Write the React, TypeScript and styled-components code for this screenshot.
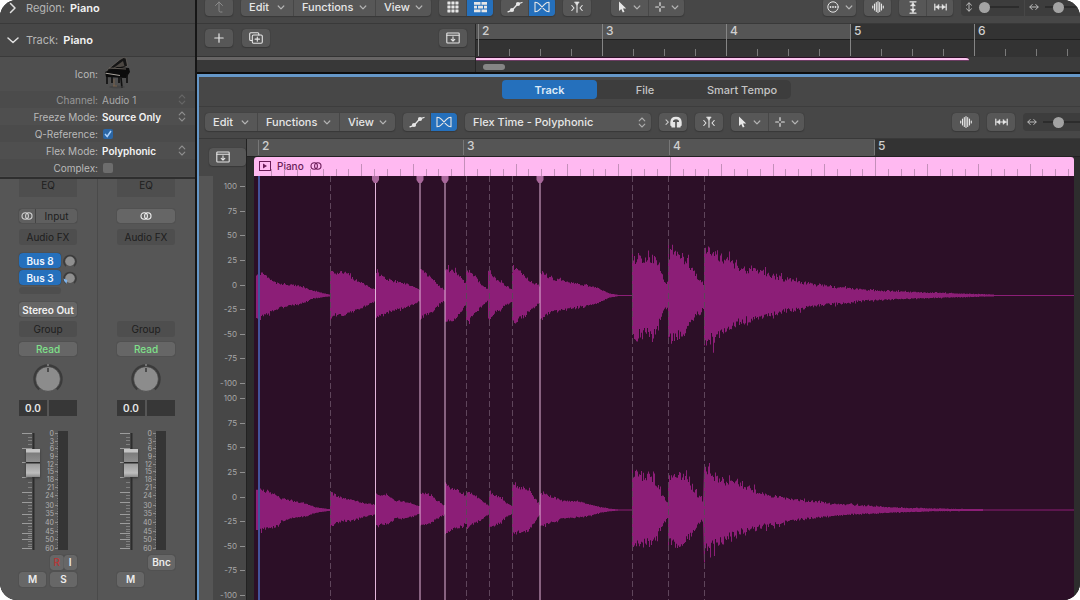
import React from 'react';
import styled, { createGlobalStyle, css } from 'styled-components';

const GlobalStyle = createGlobalStyle`
  * { box-sizing: border-box; }
  body { margin: 0; background: #fff; }
  body, button, select, input {
    font-family: Inter, "Liberation Sans", sans-serif;
    font-size: 11px;
    color: #e6e6e6;
  }
  button, select {
    border: 0;
    margin: 0;
    padding: 0;
    background: none;
  }
  svg { display: block; flex: none; }
`;

const BLUE = '#2570bc';

/* ---------- Shared controls ---------- */

const Window = styled.div`
  display: flex;
  min-height: 100vh;
  border-radius: 17px;
  overflow: hidden;
  background: #161616;
`;

const Spacer = styled.div`
  flex: 1;
`;

const Group = styled.div<{ $apart?: boolean }>`
  display: flex;
  flex: none;
  height: 18px;
  border-radius: 4px;
  overflow: hidden;
  background: #575757;
  box-shadow: 0 0 1px #2c2c2c, 0 1px 1px #3a3a3a;
  margin-left: ${(p) => (p.$apart ? '12px' : '0')};
`;

const GroupButton = styled.button<{ $width: number; $active?: boolean; $dim?: boolean }>`
  display: flex;
  align-items: center;
  justify-content: center;
  width: ${(p) => p.$width}px;
  gap: 6px;
  color: ${(p) => (p.$dim ? '#8a8a8a' : '#e6e6e6')};
  background: ${(p) => (p.$active ? BLUE : 'transparent')};
  & + & { border-left: 1px solid ${(p) => (p.$active ? BLUE : '#474747')}; }
`;

const MenuButton = styled.button<{ $width: number }>`
  display: flex;
  align-items: center;
  justify-content: space-between;
  width: ${(p) => p.$width}px;
  padding: 0 8px 0 8px;
  font-size: 11px;
  line-height: 18px;
  font-weight: 500;
  & + & { border-left: 1px solid #474747; }
`;

const ZoomPanel = styled.div<{ $width: number; $first?: boolean }>`
  display: flex;
  align-items: center;
  flex: none;
  gap: 6px;
  width: ${(p) => p.$width}px;
  height: 18px;
  padding-left: 4px;
  overflow: hidden;
  background: #3d3d3d;
  border-radius: ${(p) => (p.$first ? '4px 0 0 4px' : '0')};
`;

const ZoomSlider = styled.input`
  appearance: none;
  flex: none;
  width: 40px;
  height: 12px;
  margin: 0;
  background: linear-gradient(#2c2c2c, #2c2c2c) center / 100% 2px no-repeat;
  &::-webkit-slider-thumb {
    appearance: none;
    width: 11px;
    height: 11px;
    border-radius: 50%;
    background: #a3a3a3;
  }
`;

/* ---------- Icons ---------- */

const stroke = { fill: 'none', stroke: 'currentColor', strokeLinecap: 'round', strokeLinejoin: 'round' } as const;

const Caret = () => (
  <svg width="8" height="5" viewBox="0 0 8 5" {...stroke} strokeWidth="1.2" opacity=".65"><path d="M1.2 1 4 3.8 6.8 1" /></svg>
);
const UpDown = () => (
  <svg width="8" height="11" viewBox="0 0 8 11" {...stroke} strokeWidth="1.1" opacity=".6"><path d="M1.2 3.8 4 1l2.8 2.8M1.2 7.2 4 10l2.8-2.8" /></svg>
);
const UpArrow = () => (
  <svg width="12" height="12" viewBox="0 0 12 12" {...stroke}><path d="M9 11H7.5Q6 11 6 9.5V1M2.5 4.5 6 1l3.5 3.5" /></svg>
);
const Grid = () => (
  <svg width="12" height="12" viewBox="0 0 12 12" fill="currentColor">
    {[0, 4, 8].map((x) => [0, 4, 8].map((y) => <rect key={`${x}-${y}`} x={x + 0.4} y={y + 0.4} width="3.1" height="3.1" rx=".4" />))}
  </svg>
);
const Lanes = () => (
  <svg width="13" height="12" viewBox="0 0 13 12" fill="currentColor">
    <path d="M0 1h6.500v2.800H0zM7.500 1h5.500v2.800H7.500zM0 4.800h3v2.600H0zM4 4.800h5v2.600H4zM10 4.800h3v2.600h-3zM0 8.400h6.500v2.800H0zM7.500 8.400h5.500v2.800H7.500z" />
  </svg>
);
const Automation = () => (
  <svg width="16" height="12" viewBox="0 0 16 12" {...stroke} strokeWidth="1.3">
    <path d="M1 10.800 5 9.300 11 2.800l4-1.300" /><circle cx="5" cy="9" r="2.100" fill="currentColor" stroke="none" /><circle cx="11" cy="3" r="2.100" fill="currentColor" stroke="none" />
  </svg>
);
const Flex = () => (
  <svg width="16" height="12" viewBox="0 0 16 12" {...stroke} strokeWidth="1.100"><path d="M1 1.2v9.6M15 1.2v9.6M1 1.2q2.600 0 4.500 2.100L10.500 8.700q1.900 2.100 4.500 2.100M15 1.2q-2.600 0-4.500 2.100L5.500 8.700Q3.600 10.800 1 10.800" /></svg>
);
const CatchContent = () => (
  <svg width="12" height="12" viewBox="0 0 12 12" {...stroke} strokeWidth="1.1">
    <path d="M.8 4.500 3 7 .8 9.500M11.200 4.500 9 7l2.200 2.500M6 3v8.200" /><path d="M3.800 1h4.400L6 4z" fill="currentColor" strokeWidth=".6" />
  </svg>
);
const Pointer = () => (
  <svg width="9" height="12" viewBox="0 0 9 12" fill="currentColor"><path d="M1 .5v9.600L3.300 8l1.500 3.500 1.700-.7L5 7.400h3.200z" /></svg>
);
const Cross = () => (
  <svg width="10" height="10" viewBox="0 0 10 10" {...stroke} strokeWidth="1.200"><path d="M5 .7v2.800M5 6.500v2.800M.7 5h2.800M6.500 5h2.800" /></svg>
);
const Plus = () => (
  <svg width="10" height="10" viewBox="0 0 10 10" {...stroke} strokeWidth="1.2"><path d="M5 .8v8.400M.8 5h8.400" /></svg>
);
const Duplicate = () => (
  <svg width="14" height="12" viewBox="0 0 14 12" {...stroke} strokeWidth="1.1"><path d="M3 8.500H1.800Q.7 8.500.7 7.500V1.700Q.7.7 1.800.7h7q1 0 1 1V3" /><rect x="3.300" y="3" width="10" height="8.300" rx="1.200" /><path d="M8.300 5v4.300M6.100 7.150h4.400" /></svg>
);
const CatchBox = () => (
  <svg width="14" height="12" viewBox="0 0 14 12" {...stroke} strokeWidth="1.1"><rect x=".8" y="1" width="12.400" height="10" rx=".8" /><path d="M1 3.200h12M7 4.800v4.200M5.200 7.400 7 9.200l1.800-1.800" /></svg>
);
const Dots = () => (
  <svg width="12" height="12" viewBox="0 0 12 12" {...stroke}><circle cx="6" cy="6" r="5.200" /><g fill="currentColor" stroke="none"><circle cx="3.500" cy="6" r=".9" /><circle cx="6" cy="6" r=".9" /><circle cx="8.500" cy="6" r=".9" /></g></svg>
);
const Wave = () => (
  <svg width="12" height="12" viewBox="0 0 12 12" {...stroke} strokeWidth="1.1"><path d="M.7 5v2M2.500 3v6M4.300 1.500v9M6 .600v10.800M7.700 1.500v9M9.500 3v6M11.300 5v2" /></svg>
);
const FitH = () => (
  <svg width="13" height="10" viewBox="0 0 13 10" {...stroke} strokeWidth="1.200"><path d="M.8 2v6M12.200 2v6M2 5h9" /><path d="M5 2.500v5L1.900 5zM8 2.500v5L11.100 5z" fill="currentColor" strokeWidth=".4" /></svg>
);
const FitV = () => (
  <svg width="10" height="13" viewBox="0 0 10 13" {...stroke} strokeWidth="1.200"><path d="M2 .8h6M2 12.200h6M5 2v9" /><path d="M2.500 5h5L5 1.900zM2.500 8h5L5 11.100z" fill="currentColor" strokeWidth=".4" /></svg>
);
const ArrowsH = () => (
  <svg width="10" height="8" viewBox="0 0 10 8" {...stroke} opacity=".75"><path d="M1 4h8M3.200 1.500.8 4l2.400 2.500M6.800 1.500 9.200 4 6.800 6.500" /></svg>
);
const ArrowsV = () => (
  <svg width="8" height="10" viewBox="0 0 8 10" {...stroke} opacity=".75"><path d="M4 1v8M1.500 3.200 4 .8l2.500 2.400M1.500 6.800 4 9.200l2.500-2.400" /></svg>
);
const Monitor = () => (
  <svg width="17" height="12" viewBox="0 0 17 12" {...stroke} strokeWidth="1.100">
    <path d="m1 3.800 2.300 2.300L1 8.400" opacity=".8" /><path d="M6.600 9V6Q6.800 2 11 2t4.400 4v3" strokeWidth="2.600" /><path d="M7 6.500h2.600v4.500H7zM12.400 6.500H15v4.500h-2.600z" fill="currentColor" />
  </svg>
);
const Stereo = () => (
  <svg width="12" height="8" viewBox="0 0 12 8" {...stroke} strokeWidth="1.100"><circle cx="4.200" cy="4" r="3.200" /><circle cx="7.800" cy="4" r="3.200" /></svg>
);
const PianoPicture = () => (
  <svg width="30" height="34" viewBox="0 0 30 34">
    <path d="M5 13 18 2.500Q22-.5 24 1l1.500 8-9 4-11 1.500z" fill="#151515" stroke="#6f6863" strokeWidth=".7" />
    <path d="M10 12 21 4l1.500 5z" fill="#4c4742" />
    <path d="M3 15 15 10l12 1 1 4-4 6-20-1z" fill="#0c0c0c" />
    <path d="M3.500 16.200 18 18.500" stroke="#a9a49d" />
    <path d="M7 11 24 12" stroke="#857d74" strokeWidth=".7" />
    <path d="M5 20v7M10 20v6M19 21l1 10M25 17v9M17 20v6" stroke="#111" strokeWidth="1.700" />
    <ellipse cx="15" cy="30" rx="8" ry="1.500" fill="#3d3d3d" opacity=".6" />
    <path d="M12 22v7M11 29h4" stroke="#8a6c4a" strokeWidth=".7" />
  </svg>
);

/* ---------- Inspector ---------- */

const Sidebar = styled.aside`
  flex: none;
  display: flex;
  flex-direction: column;
  width: 197px;
  background: #565656;
  border-right: 2px solid #161616;
`;

const DisclosureRow = styled.button<{ $height: number; $bottom?: number }>`
  display: flex;
  align-items: center;
  gap: 5px;
  height: ${(p) => p.$height}px;
  padding: 0 0 ${(p) => p.$bottom ?? 0}px 7px;
  background: #474747;
  border-bottom: 1px solid #3a3a3a;
  font-size: 11px;
  color: #b5b5b5;
  svg { width: 12px; margin-right: 2px; color: #e0e0e0; }
  b { font-weight: 600; color: #f2f2f2; }
`;

const Parameters = styled.div`
  background: #4f4f4f;
  border-bottom: 2px solid #2e2e2e;
  padding-bottom: 1px;
`;

const ParamRow = styled.label<{ $tall?: boolean; $dim?: boolean }>`
  display: grid;
  grid-template-columns: 98px 1fr;
  align-items: center;
  column-gap: 4px;
  height: ${(p) => (p.$tall ? '34px' : '17px')};
  padding-right: 9px;
  font-size: 10px;
  color: #b9b9b9;
  &:nth-child(even) { background: #4b4b4b; }
  & > span { text-align: right; }
  ${(p) => p.$dim && css`
    color: #979797;
    svg { opacity: .35; }
    select { color: #a9a9a9; font-weight: 400; }
  `}
`;

const SelectWrap = styled.div`
  display: flex;
  align-items: center;
  flex: 1;
  min-width: 0;
`;

const ParamSelect = styled.select`
  appearance: none;
  flex: 1;
  min-width: 0;
  font-size: 10px;
  font-weight: 600;
  color: #f4f4f4;
  height: 17px;
  outline: 0;
`;

const Tick = styled.input`
  appearance: none;
  width: 10px;
  height: 10px;
  margin: 0 1px;
  border-radius: 2px;
  background: #6d6d6d;
  &:checked {
    background: #2b66a5 url("data:image/svg+xml,%3Csvg xmlns='http://www.w3.org/2000/svg' viewBox='0 0 10 10'%3E%3Cpath d='M2 5l2.200 2.500L8 2' fill='none' stroke='%23a9d2ff' stroke-width='1.500'/%3E%3C/svg%3E") center no-repeat;
  }
`;

/* ---------- Channel strips ---------- */

const Strips = styled.div`
  display: flex;
  flex: 1;
`;

const Strip = styled.section`
  width: 98px;
  padding: 0 20px 12px 19px;
  display: flex;
  flex-direction: column;
  & + & { border-left: 1px solid #4a4a4a; }
`;

const Slot = styled.button<{ $height: number; $after: number; $kind?: 'raised' | 'bright' | 'auto' | 'off' | 'eq' }>`
  display: flex;
  align-items: center;
  justify-content: center;
  flex: none;
  height: ${(p) => p.$height}px;
  margin-bottom: ${(p) => p.$after}px;
  font-size: 10px;
  border-radius: 3px;
  white-space: nowrap;
  color: #1d1d1d;
  background: #4e4e4e;
  ${(p) => (p.$kind === 'raised' || p.$kind === 'bright' || p.$kind === 'auto') && css`
    background: #666;
    box-shadow: 0 0 1px #2e2e2e;
    color: #f2f2f2;
    font-weight: 600;
  `}
  ${(p) => p.$kind === 'auto' && css`color: #7fe08a; font-weight: 500;`}
  ${(p) => p.$kind === 'off' && css`visibility: hidden;`}
  ${(p) => p.$kind === 'eq' && css`padding-bottom: 7px; border-radius: 0;`}
`;

const InputSlot = styled.div`
  display: flex;
  height: 14px;
  margin-bottom: 6px;
  border-radius: 3px;
  background: #5f5f5f;
  box-shadow: 0 0 1px #222;
`;

const InputPart = styled.button<{ $grow?: boolean }>`
  display: flex;
  align-items: center;
  justify-content: center;
  flex: ${(p) => (p.$grow ? '1' : '0 0 16px')};
  font-size: 10px;
  color: ${(p) => (p.$grow ? '#1d1d1d' : '#d5d5d5')};
  border-left: ${(p) => (p.$grow ? '1px solid #444' : '0')};
`;

const Sends = styled.div`
  display: grid;
  grid-template-columns: 42px 14px;
  column-gap: 2px;
  row-gap: 2px;
  height: 41px;
  margin-bottom: 8px;
  align-content: start;
  align-items: center;
`;

const Send = styled.button<{ $empty?: boolean }>`
  height: ${(p) => (p.$empty ? '7px' : '15px')};
  border-radius: 4px;
  font-size: 10px;
  font-weight: 600;
  color: #eef5ff;
  background: ${(p) => (p.$empty ? '#4e4e4e' : BLUE)};
  box-shadow: ${(p) => (p.$empty ? 'none' : '0 0 1px #1b2b3d')};
`;

const KnobHolder = styled.div`
  display: flex;
  justify-content: center;
  height: 31px;
  margin-bottom: 6px;
`;

const Readouts = styled.div`
  display: grid;
  grid-template-columns: 28px 28px;
  justify-content: space-between;
  margin-bottom: 12px;
`;

const Readout = styled.output`
  height: 16px;
  line-height: 16px;
  font-size: 10px;
  font-weight: 600;
  text-align: center;
  background: #373737;
`;

const FaderRow = styled.div`
  display: flex;
  height: 126px;
  margin-bottom: 1px;
`;

const FaderBox = styled.div`
  position: relative;
  width: 23px;
  height: 118px;
  margin-top: 4px;
`;

const Fader = styled.input`
  position: absolute;
  inset: 0 auto 0 7px;
  appearance: none;
  writing-mode: vertical-lr;
  direction: rtl;
  width: 14px;
  height: 118px;
  margin: 0;
  background: transparent;
  &::-webkit-slider-thumb {
    appearance: none;
    width: 14px;
    height: 28px;
    background: linear-gradient(#c4c4c4 0 3px, #7c7c7c 4px, #8f8f8f 13px, #2a2a2a 13px 14px, #9d9d9d 15px, #bdbdbd 24px, #8b8b8b 28px);
    box-shadow: 0 1px 2px #333;
  }
`;

const ButtonPair = styled.div<{ $after?: number }>`
  display: grid;
  grid-template-columns: 27px 27px;
  justify-content: space-between;
  height: 15px;
  margin-bottom: ${(p) => p.$after ?? 0}px;
`;

const SmallButton = styled.button<{ $red?: boolean; $column?: number }>`
  grid-column: ${(p) => p.$column ?? 'auto'};
  font-size: 10px;
  font-weight: 600;
  line-height: 15px;
  border-radius: 3px;
  color: ${(p) => (p.$red ? '#b13a3a' : '#ececec')};
  background: #676767;
  box-shadow: 0 0 1px #2b2b2b;
`;

const JoinedButtons = styled.div`
  grid-column: 2;
  display: grid;
  grid-template-columns: 1fr 1fr;
`;

const Knob = () => (
  <svg width="32" height="31" viewBox="0 0 32 31">
    <path d="M7.500 26A13.200 13.200 0 1 1 24.500 26" fill="none" stroke="#3b3b3b" strokeWidth="3" />
    <circle cx="16" cy="16" r="12.300" fill="#8c8c8c" stroke="#444" strokeWidth=".6" />
    <path d="M16 1v2" stroke="#aaa" /><path d="M16 5v4" stroke="#222" strokeWidth="1.200" />
  </svg>
);

const SendKnob = ({ low }: { low?: boolean }) => (
  <svg width="14" height="14" viewBox="0 0 14 14">
    <path d="M3 12A6 6 0 1 1 11 12" fill="none" stroke="#3c3c3c" strokeWidth="1.800" />
    <circle cx="7" cy="7.300" r="4.700" fill="#8f8f8f" />
    {low && <path d="M.5 7.500Q.5 10.800 3.500 12.800L4.300 9z" fill="#7fb4ec" />}
  </svg>
);

const FADER_LONG = [2, 17, 31, 46, 61, 71, 83, 92, 102, 108, 117];
const FADER_SHORT = [6, 9, 13, 21, 26, 36, 41, 51, 56, 64, 67, 74, 77, 80, 86, 89, 95, 98, 100, 104, 106, 110, 113, 115];
const FaderScale = () => (
  <svg width="23" height="118" viewBox="0 0 23 118">
    <path d={FADER_LONG.map((y) => `M3 ${y - 0.5}h10`).join('')} stroke="#9c9c9c" />
    <path d={FADER_SHORT.map((y) => `M9 ${y - 0.5}h4`).join('')} stroke="#7f7f7f" />
    <path d="M14.500 1v117" stroke="#2d2d2d" strokeWidth="2" />
  </svg>
);

const METER: [string, number][] = [
  ['0', 2], ['3', 10], ['6', 17], ['9', 25], ['12', 33], ['15', 40], ['18', 48], ['21', 56],
  ['24', 64], ['30', 74], ['35', 82], ['40', 91], ['45', 100], ['50', 108], ['60', 117],
];
const MeterScale = () => (
  <svg width="27" height="126" viewBox="0 -4 27 126">
    <g fill="#b0b0b0" fontSize="7" textAnchor="end">
      {METER.map(([label, y]) => <text key={label} x="12" y={y + 2}>{label}</text>)}
    </g>
    <path d={METER.map(([, y]) => `M13 ${y - 0.5}h3`).join('')} stroke="#8d8d8d" />
    <path d="M15.500 1v117" stroke="#858585" strokeDasharray="1 1.600" />
    <rect x="16" y="-1" width="10" height="119" fill="#353535" />
  </svg>
);

const ChannelStrip = ({ output }: { output?: boolean }) => (
  <Strip aria-label={output ? 'Output channel' : 'Audio channel'}>
    <Slot $height={18} $after={12} $kind="eq">EQ</Slot>
    {output ? (
      <Slot $height={14} $after={6} $kind="raised" aria-label="Format"><Stereo /></Slot>
    ) : (
      <InputSlot>
        <InputPart aria-label="Format"><Stereo /></InputPart>
        <InputPart $grow>Input</InputPart>
      </InputSlot>
    )}
    <Slot $height={16} $after={8}>Audio FX</Slot>
    <Sends>
      {!output && (
        <>
          <Send>Bus 8</Send><SendKnob />
          <Send>Bus 3</Send><SendKnob low />
          <Send $empty aria-label="Empty send" />
        </>
      )}
    </Sends>
    <Slot $height={15} $after={4} $kind={output ? 'off' : 'bright'}>{output ? '' : 'Stereo Out'}</Slot>
    <Slot $height={16} $after={5}>Group</Slot>
    <Slot $height={14} $after={7} $kind="auto">Read</Slot>
    <KnobHolder><Knob /></KnobHolder>
    <Readouts>
      <Readout>0.0</Readout>
      <Readout />
    </Readouts>
    <FaderRow>
      <FaderBox>
        <FaderScale />
        <Fader type="range" min="0" max="100" defaultValue="81" aria-label="Volume" />
      </FaderBox>
      <MeterScale />
    </FaderRow>
    <ButtonPair $after={2}>
      {output ? (
        <SmallButton $column={2}>Bnc</SmallButton>
      ) : (
        <JoinedButtons>
          <SmallButton $red>R</SmallButton>
          <SmallButton>I</SmallButton>
        </JoinedButtons>
      )}
    </ButtonPair>
    <ButtonPair>
      <SmallButton>M</SmallButton>
      {!output && <SmallButton>S</SmallButton>}
    </ButtonPair>
  </Strip>
);

/* ---------- Main area ---------- */

const Main = styled.main`
  flex: 1;
  min-width: 0;
  display: flex;
  flex-direction: column;
`;

const Toolbar = styled.div<{ $main?: boolean }>`
  display: flex;
  align-items: flex-end;
  gap: 8px;
  height: ${(p) => (p.$main ? '24px' : '32px')};
  padding: ${(p) => (p.$main ? '0 0 7px 8px' : '0 0 7px 6px')};
  overflow: hidden;
  background: #474747;
  border-bottom: 1px solid #393939;
`;

const ZoomPanels = styled.div`
  display: flex;
  gap: 1px;
`;

const Arrange = styled.div`
  display: flex;
  border-bottom: 2px solid #0d0d0d;
`;

const TrackHeader = styled.div`
  flex: none;
  width: 278px;
  background: #383838;
`;

const TrackTools = styled.div`
  display: flex;
  gap: 9px;
  height: 33px;
  padding: 5px 8px 0 8px;
  background: #474747;
  border-bottom: 1px solid #333;
`;

const TrackEdge = styled.div`
  height: 3px;
  background: #676565;
`;

const Timeline = styled.div`
  flex: 1;
  min-width: 0;
  overflow: hidden;
  background: #3b3b3b;
  border-left: 1px solid #262626;
`;

const MainRuler = styled.div`
  display: flex;
  height: 33px;
  padding: 0 0 1px 2px;
  overflow: hidden;
  background:
    linear-gradient(#555, #555) 0 0 / 374px 15px no-repeat,
    linear-gradient(#1f1f1f, #1f1f1f) 0 15px / 100% 1px no-repeat,
    #333;
`;

const MainBar = styled.span`
  flex: none;
  width: 124px;
  padding-left: 3px;
  border-left: 1px solid #858585;
  font-size: 12px;
  line-height: 13px;
  font-weight: 500;
  color: #cfcfcf;
  background: repeating-linear-gradient(90deg, transparent 0 30px, #7a7a7a 30px 31px) 0 100% / 100% 7px no-repeat;
`;

const RegionEdge = styled.div`
  width: 493px;
  height: 4px;
  border-top: 1px solid #2c0f27;
  border-bottom: 1px solid #6b3b62;
  background: #fbc5ee;
  border-radius: 0 3px 0 0;
`;

const ScrollThumb = styled.div`
  width: 22px;
  height: 6px;
  margin: 3px 0 2px 7px;
  border-radius: 3px;
  background: #858585;
`;

const Editor = styled.section`
  flex: 1;
  display: flex;
  flex-direction: column;
  border-top: 3px solid #6597c8;
  border-left: 2px solid #6597c8;
  background: #474747;
`;

const TabRow = styled.div`
  display: flex;
  justify-content: center;
  height: 30px;
  padding: 3px 0 0 14px;
  border-bottom: 1px solid #3d3d3d;
`;

const Tabs = styled.div`
  display: grid;
  grid-template-columns: 95px 96px 98px;
  height: 19px;
  border-radius: 5px;
  background: #3d3d3d;
`;

const Tab = styled.button<{ $active?: boolean }>`
  font-size: 11px;
  line-height: 18px;
  font-weight: ${(p) => (p.$active ? 600 : 500)};
  border-radius: 4px;
  color: ${(p) => (p.$active ? '#dceaf8' : '#c4c4c4')};
  background: ${(p) => (p.$active ? BLUE : 'transparent')};
`;

const FlexPicker = styled.label`
  display: flex;
  align-items: center;
  width: 186px;
  height: 18px;
  padding: 0 5px 0 8px;
  border-radius: 4px;
  background: #575757;
  box-shadow: 0 0 1px #2c2c2c, 0 1px 1px #3a3a3a;
`;

const FlexSelect = styled.select`
  appearance: none;
  flex: 1;
  min-width: 0;
  font-size: 11px;
  font-weight: 500;
  color: #e6e6e6;
  height: 18px;
  outline: 0;
`;

const EditorBody = styled.div`
  display: flex;
  flex: 1;
`;

const Gutter = styled.div`
  flex: none;
  display: flex;
  flex-direction: column;
  width: 47px;
`;

const GutterHead = styled.div`
  height: 37px;
  padding: 9px 0 0 10px;
`;

const Scale = styled.div`
  flex: 1;
  display: flex;
  flex-direction: column;
  gap: 6px;
  padding-top: 6px;
  border-left: 14px solid #555;
`;

const ScaleLane = styled.ol`
  display: flex;
  flex-direction: column;
  justify-content: space-between;
  height: 206px;
  margin: 0;
  padding: 0 1px 0 0;
  list-style: none;
`;

const ScaleMark = styled.li`
  display: flex;
  align-items: center;
  justify-content: flex-end;
  gap: 3px;
  height: 9px;
  font-size: 8px;
  line-height: 9px;
  color: #a6a6a6;
  &::after { content: ""; width: 5px; height: 1px; background: #8f8f8f; }
`;

const WaveColumn = styled.div`
  flex: 1;
  min-width: 0;
  display: flex;
  flex-direction: column;
  background: #2d2d2d;
  border-left: 1px solid #222;
`;

const EditorRuler = styled.div`
  display: grid;
  grid-template-columns: 205px 206px 205px 1fr;
  height: 18px;
  padding: 1px 0 2px 11px;
  background:
    linear-gradient(#222, #222) 0 100% / 100% 1px no-repeat,
    linear-gradient(#555, #555) 0 0 / 628px 100% no-repeat,
    #333;
`;

const EditorBar = styled.span`
  padding-left: 3px;
  border-left: 1px solid #777;
  font-size: 12px;
  line-height: 12px;
  font-weight: 500;
  color: #cfcfcf;
`;

const Region = styled.div`
  flex: 1;
  display: flex;
  flex-direction: column;
  margin: 0 6px 0 7px;
  overflow: hidden;
  border-radius: 3px 3px 0 0;
  background: #2c0f27;
`;

const RegionHeader = styled.header`
  position: relative;
  display: flex;
  align-items: center;
  gap: 6px;
  flex: none;
  height: 19px;
  padding: 0 0 1px 5px;
  font-size: 10px;
  font-weight: 500;
  color: #6a1c58;
  background: #ffb9f1;
`;

const TickLayer = styled.svg`
  position: absolute;
  left: 0;
  top: 0;
`;

/* Ticks fall on sixteenths; every fourth one is a beat. */
const RegionTicks = () => {
  const ticks = Array.from({ length: 64 }, (_, i) => {
    const x = Math.round(4.500 + i * 12.850) + 0.5;
    const height = i % 16 === 0 ? 19 : i % 4 === 0 && i > 4 ? 12 : 7;
    return i > 0 ? `M${x} ${19 - height}V19` : '';
  });
  return (
    <TickLayer width="820" height="19" aria-hidden="true">
      <path d={ticks.join('')} stroke="#c48fba" fill="none" />
    </TickLayer>
  );
};

/* Envelope points: time, level above the axis, level below the axis. */
type Point = [number, number, number];
const LEFT: Point[][] = [
  [[2, 22, 24], [9, 24, 21], [16, 16, 18], [26, 12, 13], [41, 11, 10], [49, 9, 8], [59, 5, 3], [75, 1, 1]],
  [[76, 28, 28], [79, 24, 21], [91, 25, 22], [96, 20, 18], [106, 14, 14], [121, 6, 6]],
  [[122, 25, 24], [131, 18, 19], [141, 15, 16], [151, 13, 13], [161, 8, 9], [165, 6, 6]],
  [[166, 27, 24], [172, 23, 21], [179, 18, 17], [186, 8, 8], [190, 6, 6]],
  [[191, 29, 29], [196, 27, 27], [201, 26, 25], [206, 20, 18], [211, 13, 10]],
  [[212, 28, 28], [216, 26, 25], [221, 20, 18], [226, 13, 13], [233, 7, 6]],
  [[234, 26, 26], [241, 18, 18], [246, 15, 15], [251, 11, 10], [257, 7, 7]],
  [[258, 27, 28], [261, 30, 28], [266, 26, 24], [271, 20, 20], [278, 14, 14], [285, 10, 8]],
  [[286, 26, 26], [294, 19, 19], [306, 16, 16], [316, 14, 14], [331, 11, 11], [344, 8, 8], [349, 5, 5], [356, 2, 2], [364, 0.6, 0.6], [377, 0.5, 0.5]],
  [[378, 40, 42], [383, 44, 46], [390, 43, 42], [400, 42, 42], [403, 34, 34], [406, 25, 25], [410, 16, 16], [413, 14, 13]],
  [[414, 48, 48], [421, 50, 50], [429, 42, 42], [434, 37, 34], [441, 25, 23], [447, 15, 15], [449, 14, 14]],
  [[450, 52, 52], [458, 50, 50], [466, 43, 42], [474, 39, 36], [486, 31, 29], [496, 28, 27], [506, 27, 24], [516, 23, 22], [528, 19, 18], [541, 17, 16], [556, 13, 13], [576, 10, 10], [596, 8, 8], [606, 7, 6], [626, 5, 5], [646, 4.5, 4], [666, 3.5, 3], [686, 3, 2.500], [706, 2.200, 2], [726, 1.500, 1.200], [739, 1, 1], [740, 0.5, 0.5], [819, 0.5, 0.5]],
];
const RIGHT: Point[][] = [
  [[2, 23, 23], [9, 21, 21], [16, 19, 20], [24, 15, 17], [27, 12, 12], [41, 9, 8], [51, 7, 7], [61, 3, 3], [75, 1, 1]],
  [[76, 19, 18], [86, 13, 12], [101, 10, 10], [111, 7, 7], [121, 5, 5]],
  [[122, 17, 16], [133, 15, 15], [141, 10, 9], [151, 9, 9], [158, 7, 7], [165, 4, 4]],
  [[166, 17, 16], [171, 18, 15], [177, 16, 14], [182, 10, 9], [190, 5, 5]],
  [[191, 28, 27], [196, 23, 22], [204, 21, 19], [212, 14, 14]],
  [[213, 20, 19], [219, 16, 15], [226, 11, 11], [234, 5, 5]],
  [[235, 18, 18], [246, 14, 14], [252, 7, 7], [257, 5, 5]],
  [[258, 28, 27], [264, 24, 24], [275, 22, 22], [279, 14, 14], [285, 6, 6]],
  [[286, 18, 18], [296, 15, 14], [308, 10, 9], [321, 9, 8], [336, 6, 6], [346, 3, 3], [358, 1, 1], [364, 0.6, 0.6], [377, 0.5, 0.5]],
  [[378, 39, 39], [396, 39, 38], [402, 30, 30], [408, 16, 17], [413, 10, 10]],
  [[414, 34, 36], [421, 40, 40], [429, 37, 36], [436, 29, 29], [443, 17, 17], [448, 11, 11]],
  [[450, 44, 46], [456, 41, 42], [464, 37, 36], [476, 30, 28], [483, 30, 26], [496, 23, 21], [516, 17, 17], [536, 12, 12], [551, 10, 10], [566, 9, 8], [576, 7, 7], [596, 6, 5], [616, 4.500, 4], [646, 2.500, 2.500], [676, 1.800, 1.500], [716, 1, 1], [728, 1, 1], [729, 0.5, 0.5], [819, 0.5, 0.5]],
];

/* Integer hash to a value in 0..1, the same on every render. */
const noise = (n: number) => {
  let h = Math.imul(n + 101, 2654435761);
  h = Math.imul(h ^ (h >>> 15), 2246822519);
  h ^= h >>> 13;
  return (h >>> 0) / 4294967296;
};

const envelope = (takes: Point[][], axis: number, seed: number) => {
  const top: string[] = [];
  const bottom: string[] = [];
  takes.forEach((take) => {
    for (let x = take[0][0]; x <= take[take.length - 1][0]; x += 1) {
      const next = Math.max(1, take.findIndex((p) => p[0] >= x));
      const a = take[next - 1];
      const b = take[next];
      const t = (x - a[0]) / (b[0] - a[0]);
      const up = a[1] + (b[1] - a[1]) * t;
      const down = a[2] + (b[2] - a[2]) * t;
      const rough = x > 377 ? 0.26 : 0.16;
      const grain = (k: number) => {
        if (up < 1.2) return 1;
        const spike = noise(x * 7 + k) > 0.86 ? rough * 0.7 : 0;
        return 1 - rough * noise(x * 3 + k) + spike;
      };
      const yTop = (axis - up * grain(seed)).toFixed(1);
      const yBottom = (axis + down * grain(seed + 5000)).toFixed(1);
      top.push(`${x},${yTop} ${x + 1},${yTop}`);
      bottom.push(`${x + 1},${yBottom} ${x},${yBottom}`);
    }
  });
  return [...top, ...bottom.reverse()].join(' ');
};

const MARKERS = [121.5, 166, 191, 286];
const TRANSIENTS = [76.5, 212.5, 235.5, 258.5, 378.5, 414.5, 450.5];

const Waveform = () => (
  <svg width="820" height="424" viewBox="0 0 820 424" role="img" aria-label="Stereo waveform">
    <g fill="#8c1e77">
      <polygon points={envelope(LEFT, 119.5, 1)} />
      <polygon points={envelope(RIGHT, 334, 9000)} />
    </g>
    <path d={TRANSIENTS.map((x) => `M${x} 0V424`).join('')} stroke="#5f455b" strokeDasharray="6 3" />
    <path d="M5 0V424" stroke="#43539b" strokeWidth="2" />
    {MARKERS.map((x) => (
      <g key={x}>
        <path d={`M${x} 0V424`} stroke="#e3b6da" strokeWidth="1" />
        <path d={`M${x - 3.5} 0h7v4l-2 3h-3l-2-3z`} fill="#a8679b" />
      </g>
    ))}
  </svg>
);

const LEVELS = [100, 75, 50, 25, 0, -25, -50, -75, -100];

const MenuGroup = () => (
  <Group>
    <MenuButton $width={52}>Edit<Caret /></MenuButton>
    <MenuButton $width={82}>Functions<Caret /></MenuButton>
    <MenuButton $width={56}>View<Caret /></MenuButton>
  </Group>
);

const ToolGroup = ({ apart }: { apart?: boolean }) => (
  <Group $apart={apart}>
    <GroupButton $width={37} aria-label="Pointer tool"><Pointer /><Caret /></GroupButton>
    <GroupButton $width={36} aria-label="Marquee tool"><Cross /><Caret /></GroupButton>
  </Group>
);

const FlexGroup = () => (
  <Group>
    <GroupButton $width={27} aria-label="Automation"><Automation /></GroupButton>
    <GroupButton $width={27} $active aria-label="Flex"><Flex /></GroupButton>
  </Group>
);

const Single = ({ label, children, dim, width = 28 }: { label: string; children: React.ReactNode; dim?: boolean; width?: number }) => (
  <Group><GroupButton $width={width} $dim={dim} aria-label={label}>{children}</GroupButton></Group>
);

export default function App() {
  return (
    <>
      <GlobalStyle />
      <Window>
        <Sidebar>
          <DisclosureRow $height={24} $bottom={7}>
            <svg height="12" viewBox="0 0 12 12" {...stroke} strokeWidth="1.500"><path d="M3.500 1.500 8 6l-4.500 4.500" /></svg>
            Region: <b>Piano</b>
          </DisclosureRow>
          <DisclosureRow $height={33}>
            <svg height="12" viewBox="0 0 12 12" {...stroke} strokeWidth="1.500"><path d="M1 4l5 4.500L11 4" /></svg>
            Track: <b>Piano</b>
          </DisclosureRow>
          <Parameters>
            <ParamRow as="div" $tall><span>Icon:</span><PianoPicture /></ParamRow>
            <ParamRow $dim>
              <span>Channel:</span>
              <SelectWrap><ParamSelect><option>Audio 1</option></ParamSelect><UpDown /></SelectWrap>
            </ParamRow>
            <ParamRow>
              <span>Freeze Mode:</span>
              <SelectWrap><ParamSelect><option>Source Only</option></ParamSelect><UpDown /></SelectWrap>
            </ParamRow>
            <ParamRow><span>Q-Reference:</span><Tick type="checkbox" defaultChecked /></ParamRow>
            <ParamRow>
              <span>Flex Mode:</span>
              <SelectWrap><ParamSelect><option>Polyphonic</option></ParamSelect><UpDown /></SelectWrap>
            </ParamRow>
            <ParamRow><span>Complex:</span><Tick type="checkbox" /></ParamRow>
          </Parameters>
          <Strips>
            <ChannelStrip />
            <ChannelStrip output />
          </Strips>
        </Sidebar>

        <Main>
          <Toolbar $main>
            <Single label="Back" dim><UpArrow /></Single>
            <MenuGroup />
            <Group>
              <GroupButton $width={27} aria-label="Grid view"><Grid /></GroupButton>
              <GroupButton $width={27} $active aria-label="Track view"><Lanes /></GroupButton>
            </Group>
            <FlexGroup />
            <Single label="Catch content"><CatchContent /></Single>
            <ToolGroup apart />
            <Spacer />
            <Single label="Snap" width={33}><Dots /><Caret /></Single>
            <Single label="Waveform zoom" width={27}><Wave /></Single>
            <Group>
              <GroupButton $width={27} aria-label="Fit vertically"><FitV /></GroupButton>
              <GroupButton $width={27} aria-label="Fit horizontally"><FitH /></GroupButton>
            </Group>
            <ZoomPanels>
              <ZoomPanel $width={63} $first><ArrowsV /><ZoomSlider type="range" defaultValue="0" aria-label="Vertical zoom" /></ZoomPanel>
              <ZoomPanel $width={55}><ArrowsH /><ZoomSlider type="range" defaultValue="27" aria-label="Horizontal zoom" /></ZoomPanel>
            </ZoomPanels>
          </Toolbar>

          <Arrange>
            <TrackHeader>
              <TrackTools>
                <Single label="Add track"><Plus /></Single>
                <Single label="Duplicate track"><Duplicate /></Single>
                <Spacer />
                <Single label="Catch playhead"><CatchBox /></Single>
              </TrackTools>
              <TrackEdge />
            </TrackHeader>
            <Timeline>
              <MainRuler>
                {[2, 3, 4, 5, 6].map((bar) => <MainBar key={bar}>{bar}</MainBar>)}
              </MainRuler>
              <RegionEdge />
              <ScrollThumb />
            </Timeline>
          </Arrange>

          <Editor>
            <TabRow>
              <Tabs role="tablist">
                <Tab role="tab" aria-selected="true" $active>Track</Tab>
                <Tab role="tab" aria-selected="false">File</Tab>
                <Tab role="tab" aria-selected="false">Smart Tempo</Tab>
              </Tabs>
            </TabRow>
            <Toolbar>
              <MenuGroup />
              <FlexGroup />
              <FlexPicker>
                <FlexSelect aria-label="Flex mode"><option>Flex Time - Polyphonic</option></FlexSelect>
                <UpDown />
              </FlexPicker>
              <Single label="Monitor edits"><Monitor /></Single>
              <Single label="Catch content"><CatchContent /></Single>
              <ToolGroup />
              <Spacer />
              <Single label="Waveform zoom" width={27}><Wave /></Single>
              <Single label="Fit horizontally"><FitH /></Single>
              <ZoomPanel $width={57} $first><ArrowsH /><ZoomSlider type="range" defaultValue="33" aria-label="Editor zoom" /></ZoomPanel>
            </Toolbar>
            <EditorBody>
              <Gutter>
                <GutterHead><Single label="Catch playhead"><CatchBox /></Single></GutterHead>
                <Scale>
                  {['left', 'right'].map((lane) => (
                    <ScaleLane key={lane}>
                      {LEVELS.map((level) => <ScaleMark key={level}>{level}</ScaleMark>)}
                    </ScaleLane>
                  ))}
                </Scale>
              </Gutter>
              <WaveColumn>
                <EditorRuler>
                  {[2, 3, 4, 5].map((bar) => <EditorBar key={bar}>{bar}</EditorBar>)}
                </EditorRuler>
                <Region>
                  <RegionHeader>
                    <RegionTicks />
                    <svg width="12" height="10" viewBox="0 0 12 10"><rect x=".5" y=".5" width="11" height="9" fill="none" stroke="currentColor" /><path d="M4 2.500v5L8 5z" fill="currentColor" /></svg>
                    <span>Piano</span>
                    <Stereo />
                  </RegionHeader>
                  <Waveform />
                </Region>
              </WaveColumn>
            </EditorBody>
          </Editor>
        </Main>
      </Window>
    </>
  );
}
